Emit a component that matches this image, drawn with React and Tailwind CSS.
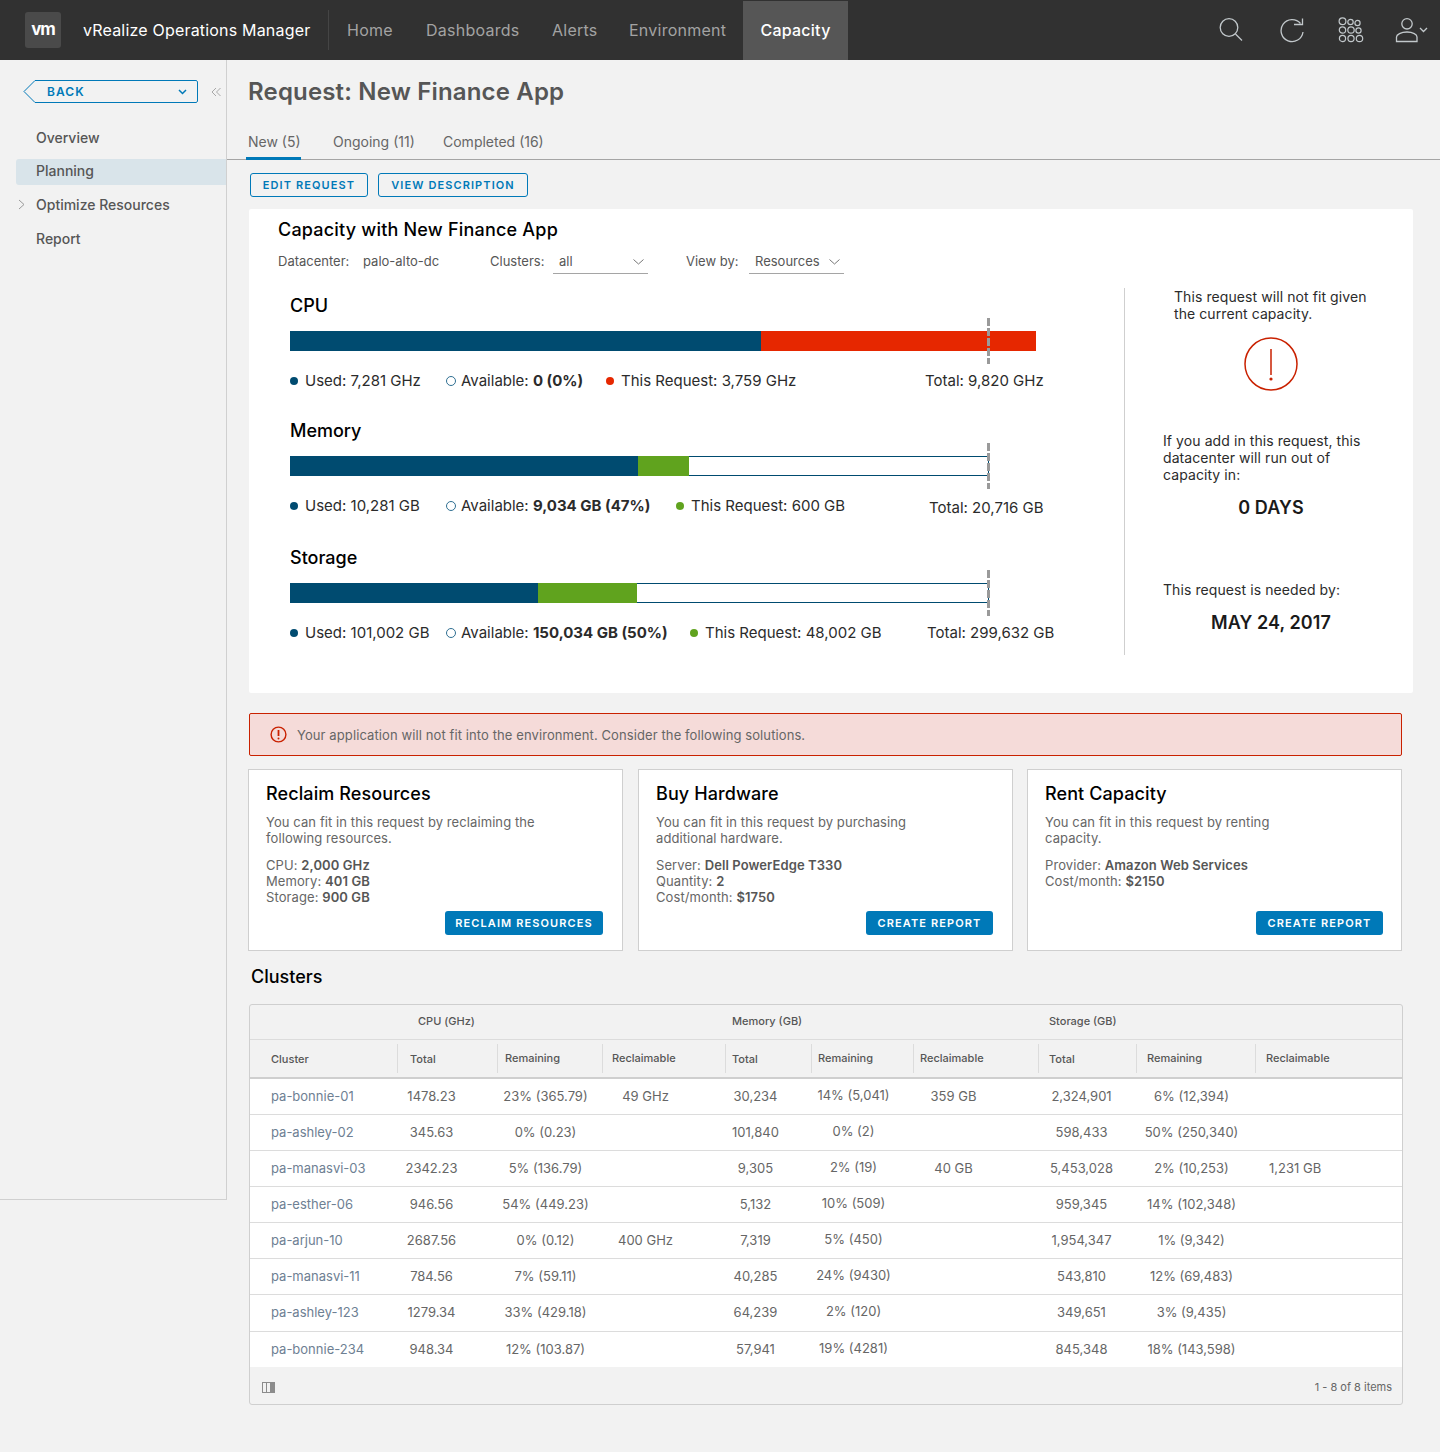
import React from "react";

const rows = [
  ["pa-bonnie-01", "1478.23", "23% (365.79)", "49 GHz", "30,234", "14% (5,041)", "359 GB", "2,324,901", "6% (12,394)", ""],
  ["pa-ashley-02", "345.63", "0% (0.23)", "", "101,840", "0% (2)", "", "598,433", "50% (250,340)", ""],
  ["pa-manasvi-03", "2342.23", "5% (136.79)", "", "9,305", "2% (19)", "40 GB", "5,453,028", "2% (10,253)", "1,231 GB"],
  ["pa-esther-06", "946.56", "54% (449.23)", "", "5,132", "10% (509)", "", "959,345", "14% (102,348)", ""],
  ["pa-arjun-10", "2687.56", "0% (0.12)", "400 GHz", "7,319", "5% (450)", "", "1,954,347", "1% (9,342)", ""],
  ["pa-manasvi-11", "784.56", "7% (59.11)", "", "40,285", "24% (9430)", "", "543,810", "12% (69,483)", ""],
  ["pa-ashley-123", "1279.34", "33% (429.18)", "", "64,239", "2% (120)", "", "349,651", "3% (9,435)", ""],
  ["pa-bonnie-234", "948.34", "12% (103.87)", "", "57,941", "19% (4281)", "", "845,348", "18% (143,598)", ""],
];

// column widths and the right padding that puts the centred values where they sit
const cols = [
  "w-[147px] pl-[21px] text-left text-[#6e8093]",
  "w-[100px] pr-[31px] text-center",
  "w-[105px] pr-[8px] text-center",
  "w-[123px] pr-[36px] text-center pt-[1px]",
  "w-[86px] pr-[25px] text-center",
  "w-[102px] pr-[17px] text-center pb-[2px]",
  "w-[125px] pr-[44px] text-center",
  "w-[98px] pr-[11px] text-center",
  "w-[119px] pr-[8px] text-center",
  "flex-1 pl-[14px] text-left",
];

const heads = [
  ["Cluster", "w-[147px] pl-[21px] pt-[2px]"],
  ["Total", "w-[100px] pl-[12px] border-l border-[#dcdcdc] pt-[2px]"],
  ["Remaining", "w-[105px] pl-[7px] border-l border-[#dcdcdc]"],
  ["Reclaimable", "w-[123px] pl-[9px] border-l border-[#dcdcdc]"],
  ["Total", "w-[86px] pl-[6px] border-l border-[#dcdcdc] pt-[2px]"],
  ["Remaining", "w-[102px] pl-[6px] border-l border-[#dcdcdc]"],
  ["Reclaimable", "w-[125px] pl-[6px] border-l border-[#dcdcdc]"],
  ["Total", "w-[98px] pl-[10px] border-l border-[#dcdcdc] pt-[2px]"],
  ["Remaining", "w-[119px] pl-[10px] border-l border-[#dcdcdc]"],
  ["Reclaimable", "flex-1 pl-[10px] border-l border-[#dcdcdc]"],
];

const Dot = ({ color }) => <span className={`inline-block w-2 h-2 rounded-full shrink-0 ${color}`} />;
const Ring = () => <span className="inline-block w-[10px] h-[10px] rounded-full shrink-0 border-[1.5px] border-[#2f6f92]" />;

const Meter = ({ used, req, reqColor, track }) => (
  <div className="relative h-5 w-[746px] flex">
    <div className="h-5 bg-[#004b70]" style={{ width: used }} />
    <div className={`h-5 ${reqColor}`} style={{ width: req }} />
    {track ? <div className="h-5 bg-white border-y border-r border-[#004b70]" style={{ width: track }} /> : null}
    <svg className="absolute left-[697px] top-[-13px]" width="3" height="46">
      <line x1="1.5" y1="0" x2="1.5" y2="46" stroke="#9a9a9a" strokeWidth="3" strokeDasharray="8 2" />
    </svg>
  </div>
);

const Legend = ({ widths, avail, reqColor, used, req, total, totalClass = "" }) => (
  <div className="flex items-center mt-[20px] h-5 text-[15px] text-[#2b2b2b]">
    <div className={`flex items-center gap-[7px] ${widths[0]}`}><Dot color="bg-[#004b70]" /><span>Used: {used}</span></div>
    <div className={`flex items-center gap-[5px] ${widths[1]}`}><Ring /><span>Available: <b className="font-bold">{avail}</b></span></div>
    <div className={`flex items-center gap-[7px] ${widths[2]}`}><Dot color={reqColor} /><span>This Request: {req}</span></div>
    <span className={totalClass}>Total: {total}</span>
  </div>
);

const Solution = ({ title, intro, lines, action, actionWidth, actionEnd = "pr-[2px]" }) => (
  <div className="w-[375px] h-[182px] bg-white border border-[#cfcfcf] px-[17px] pt-[12px] flex flex-col">
    <h3 className="text-[18px] leading-6 font-medium text-black tracking-[0.1px]">{title}</h3>
    <p className="mt-[8px] text-[13px] leading-4 text-[#666] w-[275px] tracking-[0.09px]">{intro}</p>
    <div className="mt-[11px] text-[13px] leading-4 text-[#666] tracking-[0.09px]">
      {lines.map(([k, v]) => <div key={k}>{k}: <b className="font-semibold text-[#565656]">{v}</b></div>)}
    </div>
    <div className="flex-1" />
    <div className={`flex justify-end pb-[15px] ${actionEnd}`}>
      <button className={`h-6 bg-[#0079b8] rounded-[3px] text-white text-[11px] font-semibold tracking-[1.1px] ${actionWidth}`}>{action}</button>
    </div>
  </div>
);

export default function App() {
  return (
    <div className="w-[1440px] h-[1452px] bg-[#f2f2f2] font-['Inter','Open_Sans',sans-serif] overflow-hidden">
      {/* top bar */}
      <header className="h-[60px] bg-[#313131] flex items-center">
        <div className="ml-[25px] w-9 h-9 rounded-[3px] bg-[#4a4a4a] flex items-center justify-center text-white text-[17px] font-bold tracking-[-1px] pb-[1px]">vm</div>
        <span className="ml-[22px] w-[245px] text-[16px] text-white tracking-[0.19px]">vRealize Operations Manager</span>
        <div className="w-px h-10 bg-[#454545]" />
        <nav className="flex h-[60px] items-center text-[16px] text-[#a3a3a3] tracking-[0.25px]">
          <span className="ml-[18px] w-[79px]">Home</span>
          <span className="w-[126px]">Dashboards</span>
          <span className="w-[77px]">Alerts</span>
          <span className="w-[114px]">Environment</span>
          <span className="h-[59px] mt-[1px] pb-[2px] w-[105px] bg-[#565656] flex items-center justify-center text-white font-medium">Capacity</span>
        </nav>
        <div className="ml-auto flex items-center text-[#c2c8cb]">
          <svg width="26" height="26" viewBox="0 0 26 26" fill="none" stroke="currentColor" strokeWidth="1.3" className="mr-[35px]">
            <circle cx="11" cy="10.5" r="8.8" />
            <path d="M17.5 17 L24 23.5" />
          </svg>
          <svg width="26" height="26" viewBox="0 0 26 26" fill="none" stroke="currentColor" strokeWidth="1.3" className="mr-[33px]">
            <path d="M21.5 6.5 A11 11 0 1 0 24 15" />
            <path d="M23.5 1.5 V7.5 H15" />
          </svg>
          <svg width="27" height="27" viewBox="0 0 27 27" fill="none" stroke="currentColor" strokeWidth="1.2" className="mr-[30px]">
            <circle cx="4.5" cy="4.2" r="3.4" /><circle cx="12.5" cy="5" r="2.7" /><circle cx="19.5" cy="6" r="2.6" />
            <circle cx="4.5" cy="13" r="3.2" /><circle cx="13" cy="13" r="3.2" /><circle cx="20.5" cy="13.5" r="2.6" />
            <circle cx="4.5" cy="21.5" r="3.1" /><circle cx="13" cy="21.5" r="3.1" /><circle cx="21.5" cy="21.5" r="3.2" />
          </svg>
          <svg width="24" height="26" viewBox="0 0 24 26" fill="none" stroke="currentColor" strokeWidth="1.3">
            <circle cx="12" cy="6.8" r="5.2" />
            <path d="M1.5 24.5 V20 C1.5 17.5 6 15 12 15 C18 15 22 17.5 22 20 V24.5 Z" />
          </svg>
          <svg width="9" height="6" viewBox="0 0 9 6" fill="none" stroke="currentColor" strokeWidth="1.3" className="mr-[12px]">
            <path d="M1 1 L4.5 4.5 L8 1" />
          </svg>
        </div>
      </header>

      <div className="flex items-start">
        {/* side nav */}
        <aside className="w-[227px] h-[1140px] shrink-0 border-r border-b border-[#d0d0d0]">
          <div className="pt-[20px] pl-[23px] flex items-center">
            <div className="relative w-[175px] h-[23px] flex items-center pl-[24px]">
              <svg className="absolute inset-0" width="175" height="23" viewBox="0 0 175 23" fill="none" stroke="#0079b8">
                <path d="M12 0.5 H172 A2 2 0 0 1 174.5 3 V20 A2 2 0 0 1 172 22.5 H12 L1 11.5 Z" />
              </svg>
              <span className="relative text-[12px] font-semibold tracking-[1.1px] text-[#0079b8]">BACK</span>
              <svg className="absolute left-[155px] top-[9px]" width="9" height="6" viewBox="0 0 9 6" fill="none" stroke="#0079b8" strokeWidth="1.5">
                <path d="M1 1 L4.5 4.5 L8 1" />
              </svg>
            </div>
            <svg className="ml-[13px]" width="10" height="10" viewBox="0 0 10 10" fill="none" stroke="#a8a8a8" strokeWidth="1">
              <path d="M5 1 L1 5 L5 9 M9.5 1 L5.5 5 L9.5 9" />
            </svg>
          </div>
          <div className="mt-[22px] text-[14px] font-medium text-[#565656]">
            <div className="h-[26px] pl-[36px] pb-[2px] flex items-center">Overview</div>
            <div className="mt-[8px] ml-[16px] h-[26px] pl-[20px] pb-[4px] flex items-center bg-[#d9e4ea] rounded-l-[3px]">Planning</div>
            <div className="mt-[8px] h-[26px] pb-[4px] flex items-center">
              <svg className="ml-[18px] mr-[11px]" width="7" height="11" viewBox="0 0 7 11" fill="none" stroke="#9a9a9a" strokeWidth="1">
                <path d="M1 1 L6 5.5 L1 10" />
              </svg>
              Optimize Resources
            </div>
            <div className="mt-[8px] h-[26px] pl-[36px] pb-[4px] flex items-center">Report</div>
          </div>
        </aside>

        {/* main */}
        <main className="flex-1 min-w-0 pl-px">
          <h1 className="pl-[20px] pt-[16px] h-[55px] text-[24px] leading-8 font-semibold text-[#565656] tracking-[0.17px]">Request: New Finance App</h1>
          <div className="h-[45px] -ml-px border-b border-[#a5a5a5] flex pl-[21px] text-[14px] text-[#666] relative">
            <div className="w-[85px] pt-[16px]">
              <span>New (5)</span>
              <div className="absolute left-[19px] top-[42px] w-[55px] h-[3px] bg-[#0079b8]" />
            </div>
            <div className="w-[110px] pt-[16px]">Ongoing (11)</div>
            <div className="pt-[16px]">Completed (16)</div>
          </div>

          <div className="pl-[22px] mt-[13px] flex gap-[10px]">
            <button className="h-6 w-[118px] border border-[#0079b8] rounded-[3px] text-[11px] font-semibold tracking-[1.1px] text-[#0079b8]">EDIT REQUEST</button>
            <button className="h-6 w-[150px] border border-[#0079b8] rounded-[3px] text-[11px] font-semibold tracking-[1.1px] text-[#0079b8]">VIEW DESCRIPTION</button>
          </div>

          {/* capacity card */}
          <section className="ml-[21px] mt-[12px] w-[1164px] h-[484px] bg-white rounded-[2px]">
            <h2 className="pl-[29px] pt-[9px] text-[18px] leading-6 font-medium text-black tracking-[0.2px]">Capacity with New Finance App</h2>
            <div className="pl-[29px] mt-[8px] flex items-center text-[13px] text-[#565656] h-[24px]">
              <span className="w-[85px]">Datacenter:</span>
              <span className="w-[127px]">palo-alto-dc</span>
              <span className="w-[63px]">Clusters:</span>
              <div className="w-[95px] h-[24px] border-b border-[#a5a5a5] pl-[6px] flex items-center justify-between pr-[4px]">
                all
                <svg width="11" height="6" viewBox="0 0 11 6" fill="none" stroke="#777"><path d="M0.5 0.5 L5.5 5 L10.5 0.5" /></svg>
              </div>
              <span className="ml-[38px] w-[63px]">View by:</span>
              <div className="w-[95px] h-[24px] border-b border-[#a5a5a5] pl-[6px] flex items-center justify-between pr-[4px]">
                Resources
                <svg width="11" height="6" viewBox="0 0 11 6" fill="none" stroke="#777"><path d="M0.5 0.5 L5.5 5 L10.5 0.5" /></svg>
              </div>
            </div>

            <div className="flex mt-[14px]">
              <div className="w-[875px] pl-[41px] pt-[6px]">
                <h3 className="text-[18px] leading-6 font-medium text-black">CPU</h3>
                <div className="mt-[13px]"><Meter used={471} req={275} reqColor="bg-[#e62700]" /></div>
                <Legend widths={["w-[156px]", "w-[160px]", "w-[319px]"]} reqColor="bg-[#e62700]" used="7,281 GHz" avail="0 (0%)" req="3,759 GHz" total="9,820 GHz" />

                <h3 className="mt-[28px] text-[18px] leading-6 font-medium text-black">Memory</h3>
                <div className="mt-[13px]"><Meter used={348} req={51} reqColor="bg-[#60a31e]" track={300} /></div>
                <Legend widths={["w-[156px]", "w-[230px]", "w-[253px]"]} reqColor="bg-[#60a31e]" used="10,281 GB" avail="9,034 GB (47%)" req="600 GB" total="20,716 GB" totalClass="pt-[4px]" />

                <h3 className="mt-[30px] text-[18px] leading-6 font-medium text-black">Storage</h3>
                <div className="mt-[13px]"><Meter used={248} req={99} reqColor="bg-[#60a31e]" track={352} /></div>
                <Legend widths={["w-[156px]", "w-[244px]", "w-[237px]"]} reqColor="bg-[#60a31e]" used="101,002 GB" avail="150,034 GB (50%)" req="48,002 GB" total="299,632 GB" />
              </div>

              <div className="w-px h-[367px] bg-[#cfcfcf]" />

              <div className="flex-1 text-[14px] leading-[17px] text-[#2b2b2b] tracking-[0.08px]">
                <p className="ml-[49px] w-[210px]">This request will not fit given the current capacity.</p>
                <div className="mt-[15px] ml-[119px]">
                  <svg width="54" height="54" viewBox="0 0 54 54" fill="none" stroke="#c92100">
                    <circle cx="27" cy="27" r="26" strokeWidth="1.5" />
                    <path d="M27 12 V38" strokeWidth="1.5" />
                    <circle cx="27" cy="42" r="1.6" fill="#c92100" stroke="none" />
                  </svg>
                </div>
                <p className="mt-[41px] ml-[38px] w-[210px]">If you add in this request, this datacenter will run out of capacity in:</p>
                <div className="mt-[13px] ml-[38px] w-[216px] text-center text-[18px] leading-6 font-semibold text-[#1a1a1a]">0 DAYS</div>
                <p className="mt-[61px] ml-[38px]">This request is needed by:</p>
                <div className="mt-[13px] ml-[38px] w-[216px] text-center text-[18px] leading-6 font-semibold text-[#1a1a1a]">MAY 24, 2017</div>
              </div>
            </div>
          </section>

          {/* alert */}
          <div className="ml-[21px] mt-[20px] w-[1153px] h-[43px] bg-[#f5dbd9] border border-[#c92100] rounded-[2px] flex items-center pl-[20px] text-[13px] text-[#666]">
            <svg width="17" height="17" viewBox="0 0 17 17" fill="none" stroke="#c92100" strokeWidth="1.4">
              <circle cx="8.5" cy="8.5" r="7.4" />
              <path d="M8.5 4 V10" strokeWidth="1.8" />
              <circle cx="8.5" cy="12.5" r="1" fill="#c92100" stroke="none" />
            </svg>
            <span className="ml-[10px] pt-[2px] tracking-[0.1px]">Your application will not fit into the environment. Consider the following solutions.</span>
          </div>

          {/* solutions */}
          <div className="ml-[20px] mt-[13px] flex gap-[15px]">
            <Solution title="Reclaim Resources" intro="You can fit in this request by reclaiming the following resources."
              lines={[["CPU", "2,000 GHz"], ["Memory", "401 GB"], ["Storage", "900 GB"]]} action="RECLAIM RESOURCES" actionWidth="w-[158px]" />
            <Solution title="Buy Hardware" intro="You can fit in this request by purchasing additional hardware."
              lines={[["Server", "Dell PowerEdge T330"], ["Quantity", "2"], ["Cost/month", "$1750"]]} action="CREATE REPORT" actionWidth="w-[127px]" />
            <div className="-ml-px">
              <Solution title="Rent Capacity" intro="You can fit in this request by renting capacity."
                lines={[["Provider", "Amazon Web Services"], ["Cost/month", "$2150"]]} action="CREATE REPORT" actionWidth="w-[127px]" actionEnd="pr-[1px]" />
            </div>
          </div>

          <h2 className="ml-[23px] mt-[14px] text-[18px] leading-6 font-medium text-black">Clusters</h2>

          {/* table */}
          <div className="ml-[21px] mt-[15px] w-[1154px] border border-[#cfcfcf] rounded-[3px] overflow-hidden">
            <div className="h-[35px] pb-[2px] border-b border-[#dcdcdc] relative text-[11px] font-medium text-[#565656] flex items-center">
              <span className="ml-[168px] w-[314px]">CPU (GHz)</span>
              <span className="w-[317px]">Memory (GB)</span>
              <span>Storage (GB)</span>
            </div>
            <div className="h-[39px] border-b-2 border-[#cfcfcf] flex items-center text-[11px] font-medium text-[#565656]">
              {heads.map(([label, cls], i) => (
                <div key={i} className={`h-[29px] flex items-center ${cls}`}>{label}</div>
              ))}
            </div>
            <div className="bg-white text-[13px] text-[#666]">
              {rows.map((row, r) => (
                <div key={r} className={`${r === 6 ? "h-[37px]" : r === 7 ? "h-[35px]" : "h-9"} flex items-center ${r < rows.length - 1 ? "border-b border-[#dcdcdc]" : ""}`}>
                  {row.map((cell, c) => (
                    <div key={c} className={`whitespace-nowrap ${cols[c]}`}>{cell}</div>
                  ))}
                </div>
              ))}
            </div>
            <div className="h-[37px] pt-[3px] flex items-center justify-between pl-[12px] pr-[10px] text-[11px] text-[#666]">
              <svg width="13" height="11" viewBox="0 0 13 11" fill="none">
                <rect x="0.5" y="0.5" width="12" height="10" stroke="#8c8c8c" />
                <rect x="8" y="0.5" width="4.5" height="10" fill="#8c8c8c" />
                <path d="M4.5 0.5 V10.5" stroke="#8c8c8c" />
              </svg>
              <span>1 - 8 of 8 items</span>
            </div>
          </div>
        </main>
      </div>
    </div>
  );
}
